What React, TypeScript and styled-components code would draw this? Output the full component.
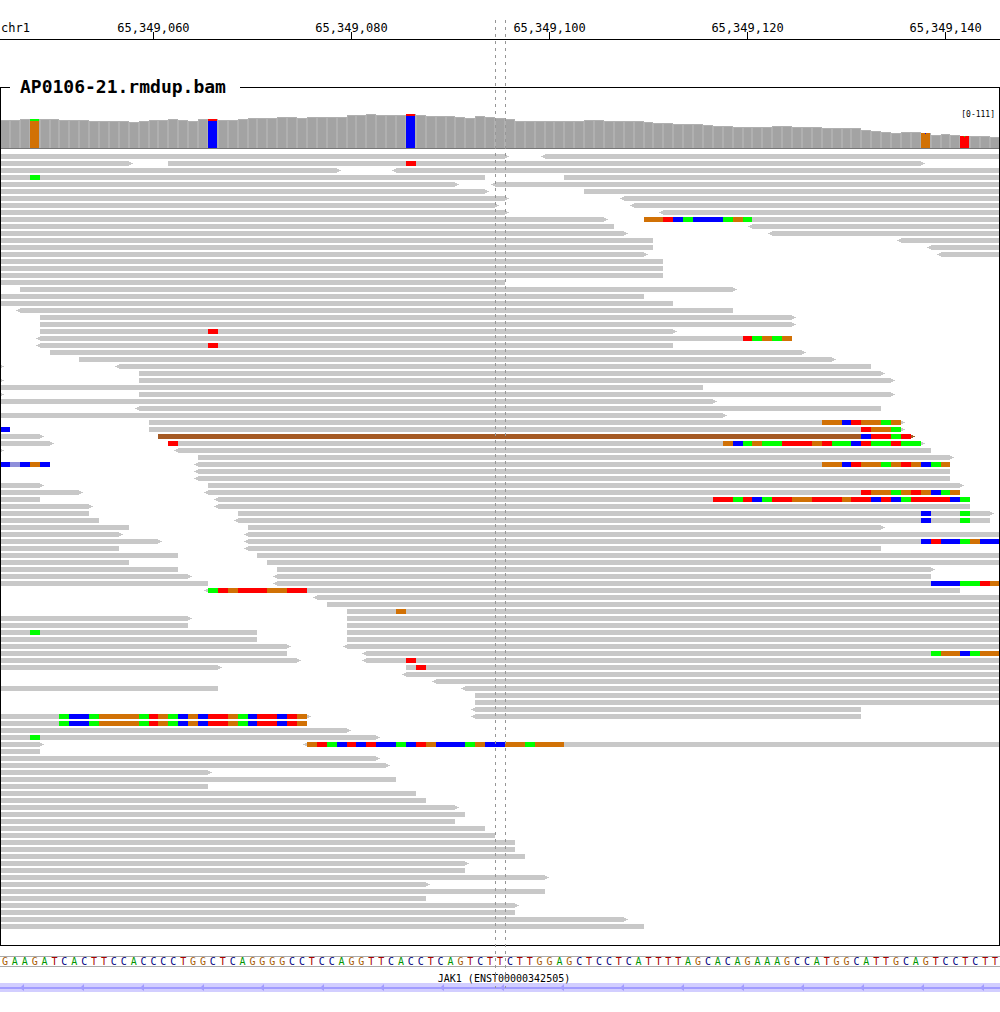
import React from "react";
import styled, { createGlobalStyle } from "styled-components";

const COLUMNS = 101;
const VIEW_WIDTH = 1000;
const ROW_PITCH = 7;
const READ_HEIGHT = 5;

const MISMATCH: Record<string, string> = {
  A: "#00ff00",
  C: "#0000ff",
  G: "#d17105",
  T: "#ff0000",
  c: "#8f8fdb",
};

const LETTER: Record<string, string> = {
  A: "#009600",
  C: "#00007f",
  G: "#a85a00",
  T: "#a80000",
};

const READ_GREY = "#c8c8c8";
const READ_BROWN = "#a55a24";

/* Left edge of a base column, in chart units */
const edge = (base: number) => Math.round((base * VIEW_WIDTH) / COLUMNS);

const SEQUENCE =
  "GAAGATCACTTCCACCCCTGGCTCAGGGGCCTCCAGGTTCACCTCAGTCTTCTTGGAGCTCCTCATTTTAGCACAGAAAGCCATGGCATTGCAGTCCTCTT";

const TICKS = [
  { column: 15, label: "65,349,060" },
  { column: 35, label: "65,349,080" },
  { column: 55, label: "65,349,100" },
  { column: 75, label: "65,349,120" },
  { column: 95, label: "65,349,140" },
];

/* Coverage as [top, number of columns] runs */
const COVERAGE_RUNS: [number, number][] = [
  [120, 2], [119, 4], [120, 3], [121, 4], [122, 1], [121, 1], [120, 2], [119, 1],
  [120, 1], [121, 1], [119, 2], [120, 2], [119, 1], [118, 3], [117, 2], [118, 1],
  [117, 4], [115, 2], [114, 1], [115, 3], [114, 1], [115, 1], [116, 3], [117, 1],
  [118, 1], [116, 1], [117, 1], [118, 1], [119, 1], [121, 7], [120, 2], [121, 4],
  [122, 1], [123, 2], [124, 3], [125, 1], [126, 2], [127, 4], [126, 2], [127, 3],
  [128, 4], [130, 1], [131, 1], [132, 1], [133, 1], [132, 2], [133, 1], [135, 1],
  [134, 1], [135, 1], [136, 3], [137, 1],
];

const COVERAGE = COVERAGE_RUNS.flatMap(([top, count]) => Array<number>(count).fill(top));

/* Variant columns: main allele, minor allele and the pixels it takes */
const VARIANTS = [
  { column: 3, main: "G", minor: "A", height: 2, width: 9 },
  { column: 21, main: "C", minor: "T", height: 2, width: 9 },
  { column: 41, main: "C", minor: "T", height: 2, width: 9 },
  { column: 93, main: "G", minor: "C", height: 1, width: 1 },
  { column: 97, main: "T", minor: "A", height: 1, width: 1 },
];

const LONG_CLIP = "6ACCAGGGGATGACGCTTGACTTCTG";

/*
 * One line per row. Reads are split by spaces: "<" marks a reverse strand start,
 * ">" a forward strand end, "!" a chimeric mate, and ":" adds mismatches
 * given as the first column and the bases that follow it.
 */
const ROWS = `0-51> <55-101
0-13> 17-93>:41T
0-34> <40-101
0-49:3A 57-101
0-46> <50-101
0-49> 59-101
0-51> <63-101
0-50> <64-101
0-51> <67-101
0-61> 65-101:65GGTCACCCAGA
0-62 <76-101
0-63> <78-101
0-66 <91-101
0-66 <94-101
0-65> <95-101
0-67
0-67
0-67
0-51
2-74>
0-65
0-68
<2-74
4-80>
4-80>
4-68>:21T
<4-80:75TAGAG
<4-68:21T
5-81>
8-84>
0-0> <12-88
14-89>
0-0> 14-90>
0-71
0-0> 14-90>
0-72>
<14-89
0-73>
15-91>:83GGCTGGAG
0-1:0C 15-91>:87TGGA
0-4> 16-92>!:87CTTAT
0-5> 17-93>:17T:73GCAGAATTTGTAACTAATAA
0-0> <18-94
20-96>
0-5:0CcCGC <20-96:83GGCTGGAGTGCAG
<20-96
<20-96
0-4> 21-97>
0-8> <21-97:87TGGAGTGCAG
0-4 <22-98:72TTATCATTGGTTTGTTCTCATTTTCA
0-9> <22-98
0-9 24-100>:93C:97A
0-10 <24-100:93C:97A
0-13 25-89>
0-12> <25-101
0-16> <25-101:93CTCCAGCC
0-12 <25-89
0-18 26-101
0-13 27-101
0-18 28-94>
0-19> <28-94
0-21 <28-101:94CCCAATG
<21-97:21ATGTTTGGTT
<32-101
33-101
35-101:40G
0-19> 35-101
0-19 35-101
0-26:3A 35-101
0-26 35-101
0-29> <35-101
0-29 <37-101:94AGGCAGG
0-30> <37-101:41T
0-22> 41-101:42T
<41-101
<44-101
0-22 <47-101
48-101
48-101
<48-87
0-31>:${LONG_CLIP} <48-87
0-31:${LONG_CLIP}
0-35>
0-38>:3A
0-4> <31-101:31GTACTCTCCACTGCCCAGCCGGAGGG
0-4
0-38>
0-39>
0-21>
0-40
0-21
0-42
0-43
0-46>
0-47
0-46
0-49
0-50
0-52
0-52
0-53
0-47>
0-47
0-55>
0-43>
0-55
0-43
0-52>
0-52
0-63>
0-65`.split("\n");

interface Read {
  start: number;
  end: number;
  reverse: boolean;
  forward: boolean;
  color: string;
  mismatches: { column: number; base: string }[];
}

function parseRead(text: string): Read {
  const [span, ...clips] = text.split(":");
  const [start, end] = span.replace(/[<>!]/g, "").split("-").map(Number);
  const mismatches = clips.flatMap((clip) => {
    const first = parseInt(clip, 10);
    return [...clip.replace(/\d/g, "")].map((base, i) => ({ column: first + i, base }));
  });
  return {
    start,
    end,
    reverse: span.includes("<"),
    forward: span.includes(">"),
    color: span.includes("!") ? READ_BROWN : READ_GREY,
    mismatches,
  };
}

const GlobalStyle = createGlobalStyle`
  body {
    margin: 0;
    background: #fff;
    color: #000;
    font-family: "DejaVu Sans Mono", "Liberation Mono", monospace;
  }
`;

const Browser = styled.main`
  position: relative;
  display: flex;
  flex-direction: column;
  overflow: hidden;
`;

const BaseGrid = styled.div`
  display: grid;
  grid-template-columns: repeat(${COLUMNS}, minmax(0, 1fr));
`;

const Ruler = styled(BaseGrid)`
  padding-top: 22px;
  border-bottom: 1px solid #000;
  font-size: 12px;
  line-height: 12px;
  white-space: nowrap;
`;

const Chromosome = styled.span`
  grid-column: 1;
  grid-row: 1;
  padding-left: 1px;
`;

const Tick = styled.div<{ $column: number }>`
  grid-column: ${(p) => p.$column + 1};
  grid-row: 1;
  display: flex;
  flex-direction: column;
  align-items: center;

  &::after {
    content: "";
    width: 1px;
    height: 7px;
    margin-top: -2px;
    background: #000;
  }
`;

const Track = styled.fieldset`
  position: relative;
  min-width: 0;
  margin: 36px 0 0;
  padding: 0;
  border: 1px solid #000;
`;

const TrackName = styled.legend`
  margin-left: 9px;
  padding: 0 14px 0 10px;
  font-size: 18px;
  font-weight: bold;
  line-height: 22px;
`;

const Chart = styled.svg<{ $height: number }>`
  display: block;
  width: 100%;
  height: ${(p) => p.$height}px;
  shape-rendering: crispEdges;
`;

const Range = styled.span`
  position: absolute;
  top: 22px;
  right: 4px;
  font-size: 8px;
  line-height: 10px;
`;

const CoveragePanel = styled.div`
  position: relative;

  ${Range} {
    top: 12px;
  }
`;

const Sequence = styled(BaseGrid)`
  margin-top: 10px;
  border: solid #aaa;
  border-width: 1px 0;
  font-size: 10px;
  line-height: 9px;
  text-align: center;
`;

const Base = styled.span<{ $base: string }>`
  color: ${(p) => LETTER[p.$base]};
`;

const Gene = styled.section`
  padding-top: 7px;
`;

const GeneName = styled.div`
  padding-left: 8px;
  font-size: 10px;
  line-height: 9px;
  text-align: center;
`;

const GeneBand = styled.svg`
  display: block;
  width: 100%;
  height: 9px;
  background: #d2ceff;
`;

const Guide = styled.div<{ $column: number }>`
  position: absolute;
  top: 20px;
  bottom: 4px;
  left: calc(100% * ${(p) => p.$column} / ${COLUMNS});
  width: 1px;
  background: repeating-linear-gradient(#969696 0 3px, transparent 3px 7px);
  pointer-events: none;
`;

function Coverage() {
  return (
    <CoveragePanel>
      <Chart $height={51} viewBox="1 98 998 51" preserveAspectRatio="none" role="img" aria-label="Coverage">
        {COVERAGE.map((top, i) => {
          const x = edge(i);
          const width = edge(i + 1) - x;
          return (
            <g key={i}>
              <rect x={x} y={top} width={width} height={148 - top} fill="#b0b0b0" />
              <rect x={x + 1} y={top + 1} width={width - 2} height={147 - top} fill="#a3a3a3" />
            </g>
          );
        })}
        {VARIANTS.map(({ column, main, minor, height, width }) => {
          const x = edge(column);
          const top = COVERAGE[column];
          return (
            <g key={column}>
              <rect x={x} y={top} width={9} height={148 - top} fill={MISMATCH[main]} />
              <rect x={x + (9 - width) / 2} y={top} width={width} height={height} fill={MISMATCH[minor]} />
            </g>
          );
        })}
        <rect x={0} y={148} width={VIEW_WIDTH} height={1} fill="#777" />
      </Chart>
      <Range>[0-111]</Range>
    </CoveragePanel>
  );
}

function ReadShape({ read, y }: { read: Read; y: number }) {
  const left = edge(read.start);
  const right = edge(read.end);
  return (
    <g fill={read.color}>
      <rect x={left} y={y} width={right - left} height={READ_HEIGHT} />
      {read.reverse && <path d={`M${left} ${y + 1}h-2v1h-2v1h2v1h2z`} />}
      {read.forward && <path d={`M${right} ${y + 1}h2v1h2v1h-2v1h-2z`} />}
      {read.mismatches.map(({ column, base }) => (
        <rect
          key={column}
          x={edge(column)}
          y={y}
          width={edge(column + 1) - edge(column)}
          height={READ_HEIGHT}
          fill={MISMATCH[base]}
        />
      ))}
    </g>
  );
}

function Alignments() {
  return (
    <Chart $height={796} viewBox="1 0 998 796" preserveAspectRatio="none" role="img" aria-label="Alignments">
      {ROWS.map((row, i) =>
        row.split(" ").map((text, j) => (
          <ReadShape key={`${i}-${j}`} read={parseRead(text)} y={5 + i * ROW_PITCH} />
        )),
      )}
    </Chart>
  );
}

export default function App() {
  return (
    <>
      <GlobalStyle />
      <Browser>
        <Ruler>
          <Chromosome>chr1</Chromosome>
          {TICKS.map(({ column, label }) => (
            <Tick key={column} $column={column}>
              {label}
            </Tick>
          ))}
        </Ruler>
        <Track>
          <TrackName>AP0106-21.rmdup.bam</TrackName>
          <Coverage />
          <Alignments />
        </Track>
        <Sequence>
          {[...SEQUENCE].map((base, i) => (
            <Base key={i} $base={base}>
              {base}
            </Base>
          ))}
        </Sequence>
        <Gene>
          <GeneName>JAK1 (ENST00000342505)</GeneName>
          <GeneBand aria-hidden="true">
            <defs>
              <pattern id="strand" width="60" height="9" patternUnits="userSpaceOnUse">
                <rect y="4" width="60" height="2" fill="#a29cff" />
                <polygon points="20,5 24,1 24,8" fill="#a29cff" />
              </pattern>
            </defs>
            <rect width="100%" height="9" fill="url(#strand)" />
          </GeneBand>
        </Gene>
        <Guide $column={50} />
        <Guide $column={51} />
      </Browser>
    </>
  );
}
